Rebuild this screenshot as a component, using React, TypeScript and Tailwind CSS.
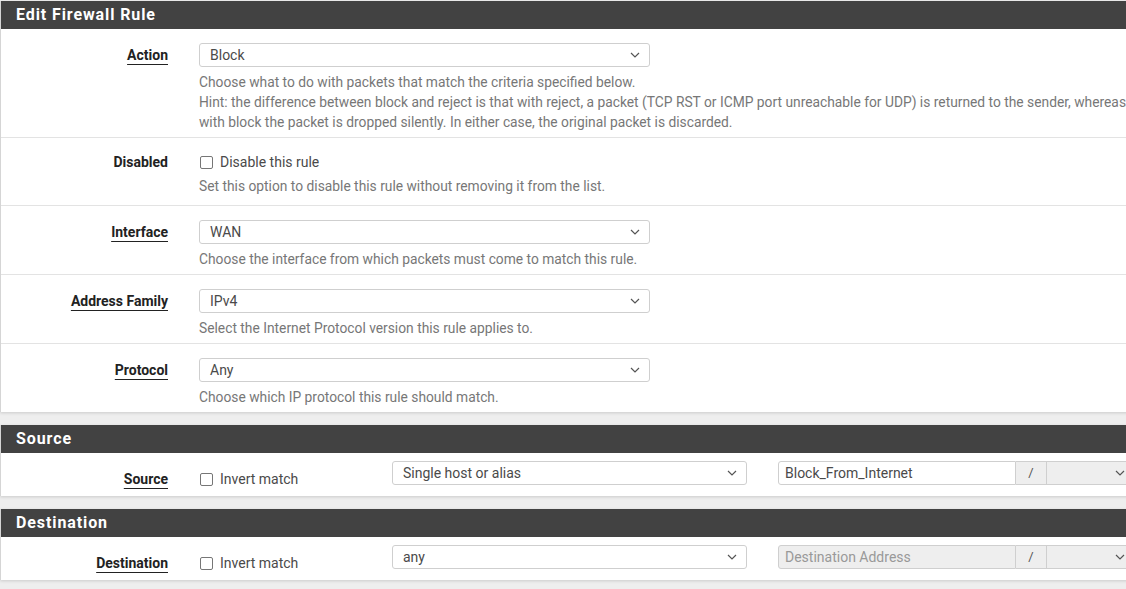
import type { ReactNode } from 'react';

const font = { fontFamily: 'Roboto, "Liberation Sans", sans-serif' };

function Chevron() {
  return (
    <svg width="10" height="6" viewBox="0 0 10 6" className="shrink-0">
      <path d="M1 1l4 4 4-4" fill="none" stroke="#555" strokeWidth="1.2" />
    </svg>
  );
}

function Select({ value, width, disabled }: { value: string; width: string; disabled?: boolean }) {
  return (
    <div
      className={`flex h-[24px] ${width} items-center justify-between rounded-[3px] border border-[#cfcfcf] pl-[10px] pr-[9px] text-[14px] text-[#4a4a4a] ${
        disabled ? 'bg-[#eeeeee]' : 'bg-white'
      }`}
    >
      <span>{value}</span>
      <Chevron />
    </div>
  );
}

function Checkbox({ label }: { label: string }) {
  return (
    <label className="flex items-center gap-[7px] text-[14px] text-[#4a4a4a]">
      <span className="h-[13px] w-[13px] rounded-[2px] border border-[#767676] bg-white" />
      {label}
    </label>
  );
}

function Label({ children, required = true }: { children: ReactNode; required?: boolean }) {
  return (
    <span
      className={`text-[14px] font-bold text-[#222] ${
        required ? 'underline decoration-1 underline-offset-[4px]' : ''
      }`}
    >
      {children}
    </span>
  );
}

function Help({ children }: { children: ReactNode }) {
  return <div className="mt-[5px] whitespace-nowrap text-[13.8px] leading-[20px] text-[#777]">{children}</div>;
}

function Row({ label, required, children, last }: { label: string; required?: boolean; children: ReactNode; last?: boolean }) {
  return (
    <div className={`flex pt-[14px] pb-[5px] ${last ? '' : 'border-b border-[#e3e3e3]'}`}>
      <div className="w-[183px] shrink-0 pr-[16px] text-right leading-[24px]">
        <Label required={required}>{label}</Label>
      </div>
      <div className="pl-[15px]">{children}</div>
    </div>
  );
}

function Header({ title }: { title: string }) {
  return (
    <div className="flex h-[28px] items-center bg-[#424242] pl-[15px] text-[16px] font-bold tracking-[0.9px] text-white">
      {title}
    </div>
  );
}

function AddressRow({ label, value, placeholder, addrValue }: { label: string; value: string; placeholder?: string; addrValue?: string }) {
  return (
    <div className="flex h-[43px] pt-[8px]">
      <div className="w-[183px] shrink-0 pr-[16px] pt-[8px] text-right leading-[20px]">
        <Label>{label}</Label>
      </div>
      <div className="w-[193px] shrink-0 pl-[16px] pt-[8px] leading-[20px]">
        <Checkbox label="Invert match" />
      </div>
      <div className="w-[386px] shrink-0 px-[15px]">
        <Select value={value} width="w-[355px]" />
      </div>
      <div className="flex pl-[15px]">
        <div
          className={`flex h-[24px] w-[238px] items-center rounded-l-[3px] border border-[#cfcfcf] pl-[6px] text-[14px] ${
            addrValue ? 'bg-white text-[#4a4a4a]' : 'bg-[#eeeeee] text-[#999]'
          }`}
        >
          {addrValue ?? placeholder}
        </div>
        <div className="flex h-[24px] w-[31px] items-center justify-center border-y border-r border-[#cfcfcf] bg-[#eeeeee] text-[13px] text-[#555]">
          /
        </div>
        <div className="flex h-[24px] w-[90px] items-center justify-end rounded-r-[3px] border-y border-r border-[#cfcfcf] bg-[#eeeeee] pr-[11px]">
          <Chevron />
        </div>
      </div>
    </div>
  );
}

export default function App() {
  return (
    <div className="h-[589px] w-[1126px] overflow-hidden bg-[#eeeeee] pt-px" style={font}>
      <div className="w-[1200px]">
        <section className="border-l border-[#d5d5d5] bg-white shadow-[0_1px_3px_rgba(0,0,0,0.15)]">
          <Header title="Edit Firewall Rule" />
          <Row label="Action">
            <Select value="Block" width="w-[451px]" />
            <Help>
              Choose what to do with packets that match the criteria specified below.
              <br />
              Hint: the difference between block and reject is that with reject, a packet (TCP RST or ICMP port unreachable for UDP) is returned to the sender, whereas
              <br />
              with block the packet is dropped silently. In either case, the original packet is discarded.
            </Help>
          </Row>
          <div className="flex border-b border-[#e3e3e3] pt-[14px] pb-[9px]">
            <div className="w-[183px] shrink-0 pr-[16px] text-right leading-[20px]">
              <Label required={false}>Disabled</Label>
            </div>
            <div className="pl-[16px]">
              <div className="h-[20px] leading-[20px]">
                <Checkbox label="Disable this rule" />
              </div>
              <div className="mt-[4px] -ml-px whitespace-nowrap text-[13.8px] leading-[20px] text-[#777]">
                Set this option to disable this rule without removing it from the list.
              </div>
            </div>
          </div>
          <Row label="Interface">
            <Select value="WAN" width="w-[451px]" />
            <Help>Choose the interface from which packets must come to match this rule.</Help>
          </Row>
          <Row label="Address Family">
            <Select value="IPv4" width="w-[451px]" />
            <Help>Select the Internet Protocol version this rule applies to.</Help>
          </Row>
          <Row label="Protocol" last>
            <Select value="Any" width="w-[451px]" />
            <Help>Choose which IP protocol this rule should match.</Help>
          </Row>
        </section>

        <section className="mt-[13px] border-l border-[#d5d5d5] bg-white shadow-[0_1px_3px_rgba(0,0,0,0.15)]">
          <Header title="Source" />
          <AddressRow label="Source" value="Single host or alias" addrValue="Block_From_Internet" />
        </section>

        <section className="mt-[13px] border-l border-[#d5d5d5] bg-white shadow-[0_1px_3px_rgba(0,0,0,0.15)]">
          <Header title="Destination" />
          <AddressRow label="Destination" value="any" placeholder="Destination Address" />
        </section>
      </div>
    </div>
  );
}
